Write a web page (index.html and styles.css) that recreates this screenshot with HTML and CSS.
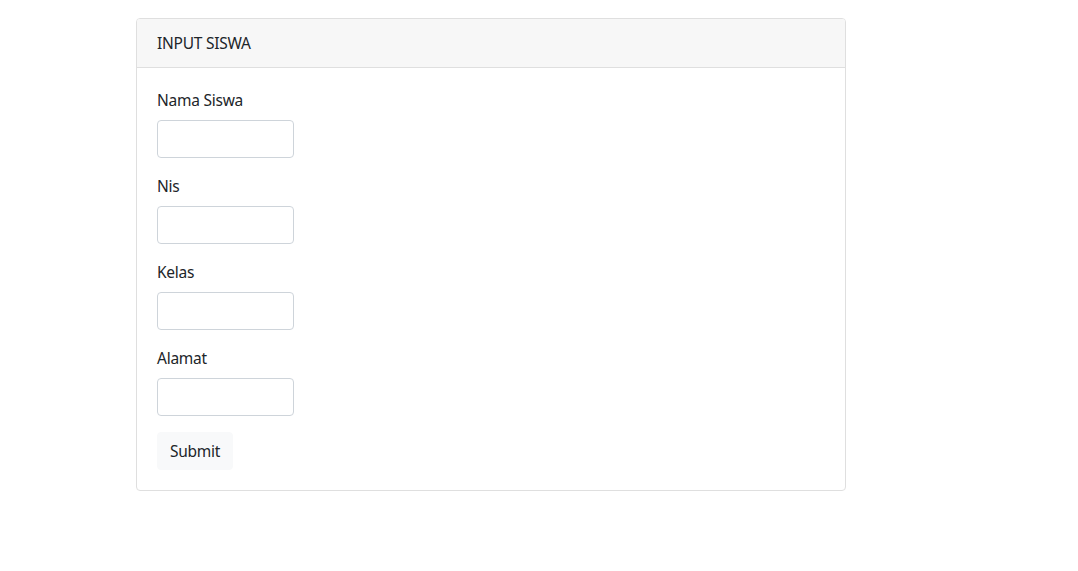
FILE: index.html
```html
<!DOCTYPE html>
<html lang="id">
<head>
<meta charset="utf-8">
<title>Input Siswa</title>
<link rel="stylesheet" href="styles.css">
</head>
<body>
<div class="wrap">
  <div class="card">
    <div class="card-header">INPUT SISWA</div>
    <form class="card-body">
      <div class="group">
        <label class="label">Nama Siswa</label>
        <input class="input" type="text">
      </div>
      <div class="group">
        <label class="label">Nis</label>
        <input class="input" type="text">
      </div>
      <div class="group">
        <label class="label">Kelas</label>
        <input class="input" type="text">
      </div>
      <div class="group">
        <label class="label">Alamat</label>
        <input class="input" type="text">
      </div>
      <button class="btn" type="button">Submit</button>
    </form>
  </div>
</div>
</body>
</html>
```
FILE: styles.css
```css
* { box-sizing: border-box; }
body {
  margin: 0;
  font-family: "Noto Sans", "Open Sans", sans-serif;
  font-size: 15.5px;
  letter-spacing: -0.25px;
  line-height: 24px;
  color: #212529;
  background: #fff;
}
.wrap {
  padding: 18px 0 0 136px;
}
.card {
  width: 710px;
  border: 1px solid #dfdfdf;
  border-radius: 4px;
  overflow: hidden;
}
.card-header {
  padding: 12px 20px;
  background: #f7f7f7;
  border-bottom: 1px solid #dfdfdf;
}
.card-body {
  padding: 20px;
  display: flex;
  flex-direction: column;
  align-items: flex-start;
  margin: 0;
}
.group {
  display: flex;
  flex-direction: column;
  align-items: flex-start;
  margin-bottom: 16px;
}
.label {
  margin-bottom: 8px;
}
.input {
  width: 137px;
  height: 38px;
  border: 1px solid #ced4da;
  border-radius: 4px;
  padding: 6px 12px;
  font: inherit;
  background: #fff;
}
.btn {
  height: 38px;
  padding: 6px 12px;
  border: 1px solid #f8f9fa;
  border-radius: 4px;
  background: #f8f9fa;
  font: inherit;
  letter-spacing: inherit;
  color: #212529;
}
```
